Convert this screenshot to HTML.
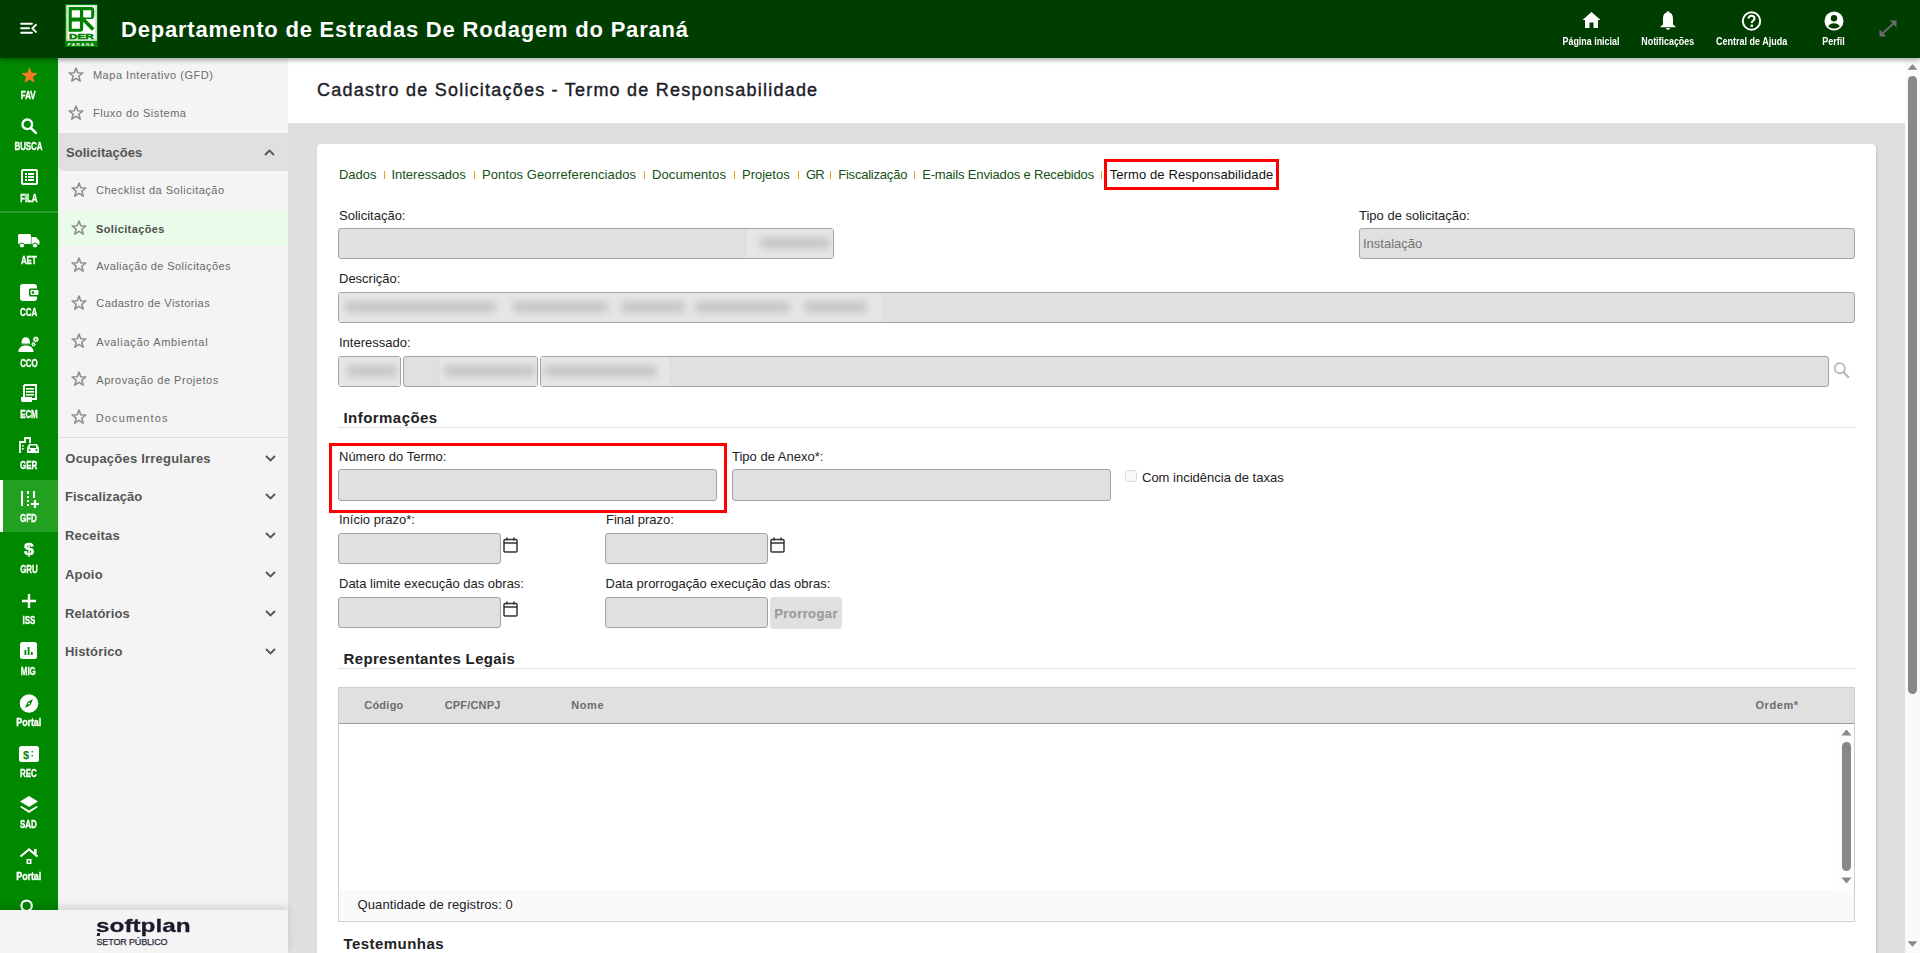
<!DOCTYPE html>
<html><head><meta charset="utf-8">
<style>
*{box-sizing:border-box;margin:0;padding:0}
html,body{width:1920px;height:953px;overflow:hidden;background:#dfdfdf;font-family:"Liberation Sans",sans-serif}
.a{position:absolute}
#hdr{left:0;top:0;width:1920px;height:58px;background:#003d00;z-index:5;box-shadow:0 2px 5px rgba(0,0,0,.35)}
#rail{left:0;top:58px;width:58px;height:852px;background:#008800;overflow:hidden}
#menu{left:58px;top:58px;width:230px;height:852px;background:#f4f4f4;overflow:hidden}
#foot{left:0;top:910px;width:288px;height:43px;background:#f4f4f4;box-shadow:0 -4px 8px rgba(0,0,0,.12)}
#titleband{left:288px;top:58px;width:1617px;height:65px;background:#fff}
#vscroll{left:1905px;top:58px;width:15px;height:895px;background:#fafafa}
#card{left:317px;top:144px;width:1559px;height:820px;background:#fff;border-radius:4px;box-shadow:1px 1px 3px rgba(0,0,0,.12)}
.rl{position:absolute;left:-0.5px;width:58px;text-align:center;color:#fff;font-weight:bold;font-size:10px;line-height:11.5px;letter-spacing:-0.15px;margin-top:1px;-webkit-text-stroke:.3px #fff}
.ri{position:absolute}
.mi{position:absolute;margin-top:1px;font-size:11px;line-height:11px;color:#6a6a6a;white-space:nowrap}
.star{position:absolute;width:16px;height:15px}
.mh{position:absolute;font-size:13px;line-height:13px;font-weight:bold;color:#555;white-space:nowrap}
.chev{position:absolute;left:207px;width:11px;height:7px}
.lbl{position:absolute;font-size:13px;line-height:13px;color:#222;white-space:nowrap}
.inp{position:absolute;background:#e0e0e0;border:1px solid #a3a3a3;border-radius:3px}
.tab{position:absolute;top:168.2px;font-size:13px;line-height:13px;color:#155015;white-space:nowrap}
.sep{position:absolute;top:171px;width:1px;height:8px;background:#e6a117}
.sec{position:absolute;font-size:15px;line-height:15px;font-weight:bold;color:#222;letter-spacing:.35px;white-space:nowrap}
.secline{position:absolute;height:1px;background:#e2e2e2}
.hi{position:absolute;top:36.6px;width:80px;text-align:center;color:#fff;font-weight:bold;font-size:10px;line-height:10px;white-space:nowrap}
.th{position:absolute;top:700.3px;font-size:11px;line-height:11px;font-weight:bold;color:#6d6d6d;white-space:nowrap}
.cal{position:absolute;width:14px;height:16px}
.blur{position:absolute;background:#c8c8c8;filter:blur(3.5px);border-radius:4px}
</style></head><body>

<!-- HEADER -->
<div id="hdr" class="a">
  <svg class="a" style="left:20px;top:21px" width="18" height="14" viewBox="0 0 18 14"><rect x="0.2" y="1.8" width="12.7" height="1.95" rx="0.95" fill="#fff"/><rect x="0.2" y="6.2" width="9.8" height="1.95" rx="0.95" fill="#fff"/><rect x="0.2" y="10.8" width="12.7" height="2" rx="1" fill="#fff"/><path d="M15.9 3.9 L12.3 7.4 L15.9 10.9" stroke="#fff" stroke-width="2" fill="none" stroke-linecap="round" stroke-linejoin="round"/></svg>
  <svg class="a" style="left:65px;top:4px" width="33" height="43" viewBox="0 0 33 43">
    <rect x="0" y="0" width="32.9" height="42.9" fill="#008000"/>
    <rect x="1.3" y="1" width="30.5" height="35.8" fill="#fff"/>
    <rect x="2.2" y="1.9" width="28.7" height="34" fill="none" stroke="#7cc47c" stroke-width="0.5"/>
    <path fill-rule="evenodd" fill="#008000" d="M3.6 3 H26 Q29.3 3 29.3 6.3 V12 Q29.3 15.1 26 15.1 H18.2 V24.5 Q18.2 27.7 15 27.7 H3.6 Z M6.8 6.3 V13.4 H14.9 V6.3 Z M18.2 6.3 V13.4 H26.2 V6.3 Z M6.8 17.4 V24.7 H14.9 V17.4 Z"/>
    <path d="M17.5 14.5 L28.2 25.6" stroke="#008000" stroke-width="3.6"/>
    <text x="4" y="35" textLength="24.8" lengthAdjust="spacingAndGlyphs" font-family="Liberation Sans" font-weight="bold" font-size="7.3" fill="#008000" stroke="#008000" stroke-width="0.5">DER</text>
    <text x="2.6" y="41.6" textLength="27.4" lengthAdjust="spacingAndGlyphs" font-family="Liberation Sans" font-weight="bold" font-size="4.3" fill="#e8f4e8" letter-spacing="0.8">PARANA</text>
  </svg>
  <!-- header right icons -->
  <svg class="a" style="left:1582px;top:11px" width="19" height="17" viewBox="0 0 19 17"><path d="M9.5 1 L18.5 9 H16 V17 H11.5 V11.5 H7.5 V17 H3 V9 H0.5 Z" fill="#fff"/></svg>
  <svg class="a" style="left:1660px;top:11px" width="16" height="19" viewBox="0 0 16 19"><circle cx="8" cy="1.6" r="1.4" fill="#fff"/><path d="M8 1.5 C3.6 1.5 3 5 3 8.5 V13.5 L0.5 15.6 V16.3 H15.5 V15.6 L13 13.5 V8.5 C13 5 12.4 1.5 8 1.5 Z" fill="#fff"/><path d="M6 17 H10 C10 18.2 9 18.8 8 18.8 C7 18.8 6 18.2 6 17 Z" fill="#fff"/></svg>
  <svg class="a" style="left:1741px;top:10.5px" width="21" height="20" viewBox="0 0 21 20"><circle cx="10.5" cy="10" r="8.7" stroke="#fff" stroke-width="2" fill="none"/><path d="M7.5 7.6 C7.5 5.8 8.8 4.8 10.5 4.8 C12.3 4.8 13.5 5.9 13.5 7.4 C13.5 9.5 10.8 9.6 10.8 12" stroke="#fff" stroke-width="2.1" fill="none"/><rect x="9.6" y="13.6" width="2.3" height="2.3" fill="#fff"/></svg>
  <svg class="a" style="left:1823.5px;top:10.5px" width="20" height="20" viewBox="0 0 20 20"><circle cx="10" cy="10" r="9.5" fill="#fff"/><circle cx="10" cy="7.3" r="3.2" fill="#003d00"/><path d="M4.2 15.3 C5.3 13 7.5 12.2 10 12.2 C12.5 12.2 14.7 13 15.8 15.3 C14.3 16.9 12.3 17.6 10 17.6 C7.7 17.6 5.7 16.9 4.2 15.3 Z" fill="#003d00"/></svg>
  <svg class="a" style="left:1879px;top:19.5px" width="18" height="17" viewBox="0 0 18 17"><path d="M2.5 14.5 L15.5 2.5" stroke="#6b6b6b" stroke-width="1.8"/><path d="M10.5 0.5 H17.5 V7.5 Z" fill="#6b6b6b"/><path d="M0.5 9.5 V16.5 H7.5 Z" fill="#6b6b6b"/></svg>
  <div class="hi" style="left:1551.3px"><span style="display:inline-block;transform:scaleX(.89)">Página inicial</span></div>
  <div class="hi" style="left:1627.9px"><span style="display:inline-block;transform:scaleX(.89)">Notificações</span></div>
  <div class="hi" style="left:1711.5px"><span style="display:inline-block;transform:scaleX(.9)">Central de Ajuda</span></div>
  <div class="hi" style="left:1793.6px"><span style="display:inline-block;transform:scaleX(.9)">Perfil</span></div>
</div>
<div class="a" style="left:121px;top:18px;font-size:22px;line-height:22px;font-weight:bold;color:#fff;letter-spacing:.8px;white-space:nowrap;z-index:6;margin-top:1px">Departamento de Estradas De Rodagem do Paraná</div>

<!-- RAIL -->
<div id="rail" class="a">
  <!-- y coords relative to rail top (58) -->
  <svg class="ri" style="left:21px;top:9px" width="17" height="16" viewBox="0 0 24 23"><path d="M12 0 L15 8.2 L24 8.6 L17 14.2 L19.4 23 L12 18 L4.6 23 L7 14.2 L0 8.6 L9 8.2 Z" fill="#f47b20"/></svg>
  <div class="rl" style="top:31px"><span style="display:inline-block;transform:scaleX(.8)">FAV</span></div>
  <svg class="ri" style="left:21px;top:60px" width="16" height="16" viewBox="0 0 16 16"><circle cx="6.3" cy="6.3" r="4.8" stroke="#fff" stroke-width="2.4" fill="none"/><path d="M9.8 9.8 L14.8 14.8" stroke="#fff" stroke-width="2.6" stroke-linecap="round"/></svg>
  <div class="rl" style="top:82px"><span style="display:inline-block;transform:scaleX(.8)">BUSCA</span></div>
  <svg class="ri" style="left:21px;top:111px" width="17" height="16" viewBox="0 0 17 16"><rect x="1" y="1" width="15" height="14" rx="1" stroke="#fff" stroke-width="2" fill="none"/><rect x="4" y="4" width="2" height="2" fill="#fff"/><rect x="7" y="4" width="6" height="2" fill="#fff"/><rect x="4" y="7" width="2" height="2" fill="#fff"/><rect x="7" y="7" width="6" height="2" fill="#fff"/><rect x="4" y="10" width="2" height="2" fill="#fff"/><rect x="7" y="10" width="6" height="2" fill="#fff"/></svg>
  <div class="rl" style="top:134px"><span style="display:inline-block;transform:scaleX(.8)">FILA</span></div>
  <div class="a" style="left:0;top:153px;width:58px;height:2px;background:#2a9a2a"></div>
  <!-- AET truck -->
  <svg class="ri" style="left:18px;top:176px" width="22" height="14" viewBox="0 0 22 14"><rect x="0" y="0" width="13" height="10" rx="1.5" fill="#fff"/><path d="M13.5 3 H18 L21.5 7 V10.5 H13.5 Z" fill="#fff"/><circle cx="4" cy="11.5" r="2.5" fill="#fff" stroke="#008800" stroke-width="1"/><circle cx="17" cy="11.5" r="2.5" fill="#fff" stroke="#008800" stroke-width="1"/></svg>
  <div class="rl" style="top:196px"><span style="display:inline-block;transform:scaleX(.8)">AET</span></div>
  <!-- CCA wallet -->
  <svg class="ri" style="left:20px;top:226px" width="19" height="17" viewBox="0 0 19 17"><rect x="0" y="0" width="17" height="17" rx="3" fill="#fff"/><rect x="9" y="4.5" width="9.5" height="8" rx="1.5" fill="#008800"/><rect x="10.5" y="6" width="8" height="5" rx="1" fill="#fff"/><circle cx="13" cy="8.5" r="1.3" fill="#008800"/></svg>
  <div class="rl" style="top:248px"><span style="display:inline-block;transform:scaleX(.8)">CCA</span></div>
  <!-- CCO -->
  <svg class="ri" style="left:18px;top:278px" width="22" height="17" viewBox="0 0 22 17"><path d="M3.5 7 C3.5 3 5.5 1.3 7.8 1.3 C10.1 1.3 12 3 12 7 Z" fill="#fff"/><rect x="3.5" y="7" width="8.5" height="1.4" fill="#fff" opacity=".6"/><path d="M0.4 16 C0.4 11.5 4 9.5 7.8 9.5 C11.6 9.5 15.6 11.5 15.6 16 Z" fill="#fff"/><path d="M20.90 3.30 L20.84 3.90 L19.83 4.14 L19.63 4.52 L19.99 5.49 L19.52 5.88 L18.64 5.33 L18.23 5.46 L17.80 6.40 L17.20 6.34 L16.96 5.33 L16.58 5.13 L15.61 5.49 L15.22 5.02 L15.77 4.14 L15.64 3.73 L14.70 3.30 L14.76 2.70 L15.77 2.46 L15.97 2.08 L15.61 1.11 L16.08 0.72 L16.96 1.27 L17.37 1.14 L17.80 0.20 L18.40 0.26 L18.64 1.27 L19.02 1.47 L19.99 1.11 L20.38 1.58 L19.83 2.46 L19.96 2.87 Z" fill="#fff"/><circle cx="17.8" cy="3.3" r="0.9" fill="#008800"/><path d="M17.90 8.30 L17.82 8.92 L16.89 9.10 L16.63 9.43 L16.70 10.38 L16.12 10.62 L15.50 9.90 L15.09 9.85 L14.30 10.38 L13.80 10.00 L14.11 9.10 L13.95 8.71 L13.10 8.30 L13.18 7.68 L14.11 7.50 L14.37 7.17 L14.30 6.22 L14.88 5.98 L15.50 6.70 L15.91 6.75 L16.70 6.22 L17.20 6.60 L16.89 7.50 L17.05 7.89 Z" fill="#fff"/><circle cx="15.5" cy="8.3" r="0.6" fill="#008800"/></svg>
  <div class="rl" style="top:299px"><span style="display:inline-block;transform:scaleX(.8)">CCO</span></div>
  <!-- ECM -->
  <svg class="ri" style="left:20px;top:326px" width="18" height="19" viewBox="0 0 18 19"><path d="M4 1 H16 V15 H12" stroke="#fff" stroke-width="2" fill="none"/><rect x="6" y="4" width="8" height="1.6" fill="#fff"/><rect x="6" y="7" width="8" height="1.6" fill="#fff"/><rect x="6" y="10" width="8" height="1.6" fill="#fff"/><path d="M4 1 V13" stroke="#fff" stroke-width="2"/><path d="M1 13 H12 V18 H3 C1.5 18 1 17 1 15.5 Z" fill="#fff"/></svg>
  <div class="rl" style="top:350px"><span style="display:inline-block;transform:scaleX(.8)">ECM</span></div>
  <!-- GER -->
  <svg class="ri" style="left:19px;top:379px" width="21" height="17" viewBox="0 0 21 17"><path d="M1 16 V5 H6 V1 H11 V6" stroke="#fff" stroke-width="1.8" fill="none"/><rect x="3" y="8" width="1.6" height="1.6" fill="#fff"/><rect x="3" y="11" width="1.6" height="1.6" fill="#fff"/><path d="M8 11 L10 7 H18 L20 11 V16 H8 Z" fill="#fff"/><rect x="11" y="8.5" width="6" height="2.5" fill="#008800"/><circle cx="10.5" cy="13" r="1" fill="#008800"/><circle cx="17.5" cy="13" r="1" fill="#008800"/></svg>
  <div class="rl" style="top:401px"><span style="display:inline-block;transform:scaleX(.8)">GER</span></div>
  <!-- GFD active -->
  <div class="a" style="left:0;top:422px;width:3px;height:52px;background:#fff"></div>
  <div class="a" style="left:3px;top:422px;width:55px;height:52px;background:#22a022"></div>
  <svg class="ri" style="left:20px;top:433px" width="19" height="17" viewBox="0 0 19 17"><rect x="1" y="0" width="2" height="15" fill="#fff"/><rect x="7" y="0" width="2" height="3" fill="#fff"/><rect x="7" y="5" width="2" height="2" fill="#fff"/><rect x="7" y="9" width="2" height="2" fill="#fff"/><rect x="7" y="13" width="2" height="2" fill="#fff"/><rect x="13" y="0" width="2" height="7" fill="#fff"/><path d="M11 13 H19 M15 9 V17" stroke="#fff" stroke-width="2.2"/></svg>
  <div class="rl" style="top:454px"><span style="display:inline-block;transform:scaleX(.8)">GFD</span></div>
  <!-- GRU -->
  <div class="a" style="left:0;top:482.5px;width:58px;text-align:center;color:#fff;font-weight:bold;font-size:17px;line-height:17px;transform:scaleX(1.05);-webkit-text-stroke:.4px #fff">$</div>
  <div class="rl" style="top:505px"><span style="display:inline-block;transform:scaleX(.8)">GRU</span></div>
  <!-- ISS -->
  <svg class="ri" style="left:22px;top:536px" width="14" height="14" viewBox="0 0 14 14"><path d="M7 0 V14 M0 7 H14" stroke="#fff" stroke-width="2.4"/></svg>
  <div class="rl" style="top:556px"><span style="display:inline-block;transform:scaleX(.8)">ISS</span></div>
  <!-- MIG -->
  <svg class="ri" style="left:20px;top:584px" width="17" height="17" viewBox="0 0 17 17"><rect x="0" y="0" width="17" height="17" rx="2.5" fill="#fff"/><rect x="4.5" y="8" width="1.8" height="5" fill="#008800"/><rect x="7.7" y="5" width="1.8" height="8" fill="#008800"/><rect x="10.9" y="10" width="1.8" height="3" fill="#008800"/></svg>
  <div class="rl" style="top:607px"><span style="display:inline-block;transform:scaleX(.8)">MIG</span></div>
  <!-- Portal compass -->
  <svg class="ri" style="left:19px;top:636px" width="20" height="19" viewBox="0 0 20 19"><circle cx="10" cy="9.5" r="9.3" fill="#fff"/><path d="M14 5 L11.5 11 L6 14 L8.5 8 Z" fill="#008800"/><circle cx="10" cy="9.5" r="1" fill="#fff"/></svg>
  <div class="rl" style="top:658px"><span style="display:inline-block;transform:scaleX(.9)">Portal</span></div>
  <!-- REC -->
  <svg class="ri" style="left:19px;top:688px" width="20" height="16" viewBox="0 0 20 16"><rect x="0" y="0" width="20" height="16" rx="2.5" fill="#fff"/><text x="4" y="12.5" font-family="Liberation Sans" font-weight="bold" font-size="11" fill="#008800">$</text><rect x="12.5" y="5" width="1.4" height="1.4" fill="#008800"/><rect x="12.5" y="9" width="1.4" height="1.4" fill="#008800"/></svg>
  <div class="rl" style="top:709px"><span style="display:inline-block;transform:scaleX(.8)">REC</span></div>
  <!-- SAD layers -->
  <svg class="ri" style="left:20px;top:738px" width="18" height="18" viewBox="0 0 18 18"><path d="M9 0 L18 5.5 L9 11 L0 5.5 Z" fill="#fff"/><path d="M1.5 10 L9 14.5 L16.5 10 L18 11 L9 17 L0 11 Z" fill="#fff"/></svg>
  <div class="rl" style="top:760px"><span style="display:inline-block;transform:scaleX(.8)">SAD</span></div>
  <!-- Portal house -->
  <svg class="ri" style="left:19px;top:790px" width="20" height="17" viewBox="0 0 20 17"><path d="M1.5 8.5 L10 1.5 L18.5 8.5" stroke="#fff" stroke-width="2.2" fill="none"/><rect x="15" y="1" width="2.6" height="5" fill="#fff"/><path d="M4 10 V17 H16 V10" stroke="#fff" stroke-width="0" fill="none"/><rect x="7.5" y="11" width="5" height="5" fill="#fff"/><rect x="9" y="12.5" width="2" height="2" fill="#008800"/></svg>
  <div class="rl" style="top:812px"><span style="display:inline-block;transform:scaleX(.9)">Portal</span></div>
  <svg class="ri" style="left:19px;top:840px" width="16" height="16" viewBox="0 0 16 16"><circle cx="7.6" cy="7.8" r="5.2" stroke="#fff" stroke-width="2.2" fill="none"/></svg>
</div>


<!-- MENU -->
<div id="menu" class="a"></div>
<div class="a" style="left:58px;top:133px;width:230px;height:38px;background:#e0e0e0;border-radius:0 0 0 6px"></div>
<div class="a" style="left:58px;top:211px;width:230px;height:35px;background:#e9fce9"></div>
<div class="a" style="left:58px;top:437px;width:230px;height:1px;background:#dcdcdc"></div>
<svg class="a" style="left:68px;top:67.2px" width="16" height="15" viewBox="0 0 24 23"><path d="M12 1.5 L14.7 8.9 L22.5 9.2 L16.4 14.1 L18.5 21.8 L12 17.4 L5.5 21.8 L7.6 14.1 L1.5 9.2 L9.3 8.9 Z" fill="none" stroke="#8f8f8f" stroke-width="2.4" stroke-linejoin="round"/></svg>
<div class="mi" style="left:92.9px;top:69.4px;letter-spacing:0.53px">Mapa Interativo (GFD)</div>
<svg class="a" style="left:68px;top:105.2px" width="16" height="15" viewBox="0 0 24 23"><path d="M12 1.5 L14.7 8.9 L22.5 9.2 L16.4 14.1 L18.5 21.8 L12 17.4 L5.5 21.8 L7.6 14.1 L1.5 9.2 L9.3 8.9 Z" fill="none" stroke="#8f8f8f" stroke-width="2.4" stroke-linejoin="round"/></svg>
<div class="mi" style="left:92.9px;top:107.4px;letter-spacing:0.54px">Fluxo do Sistema</div>
<svg class="a" style="left:70.5px;top:182.2px" width="16" height="15" viewBox="0 0 24 23"><path d="M12 1.5 L14.7 8.9 L22.5 9.2 L16.4 14.1 L18.5 21.8 L12 17.4 L5.5 21.8 L7.6 14.1 L1.5 9.2 L9.3 8.9 Z" fill="none" stroke="#8f8f8f" stroke-width="2.4" stroke-linejoin="round"/></svg>
<div class="mi" style="left:96px;top:184.4px;letter-spacing:0.52px">Checklist da Solicitação</div>
<svg class="a" style="left:70.5px;top:220.3px" width="16" height="15" viewBox="0 0 24 23"><path d="M12 1.5 L14.7 8.9 L22.5 9.2 L16.4 14.1 L18.5 21.8 L12 17.4 L5.5 21.8 L7.6 14.1 L1.5 9.2 L9.3 8.9 Z" fill="none" stroke="#8f8f8f" stroke-width="2.4" stroke-linejoin="round"/></svg>
<div class="mi" style="left:96px;top:222.5px;letter-spacing:0.38px;font-weight:bold;color:#505050">Solicitações</div>
<svg class="a" style="left:71px;top:257.4px" width="16" height="15" viewBox="0 0 24 23"><path d="M12 1.5 L14.7 8.9 L22.5 9.2 L16.4 14.1 L18.5 21.8 L12 17.4 L5.5 21.8 L7.6 14.1 L1.5 9.2 L9.3 8.9 Z" fill="none" stroke="#8f8f8f" stroke-width="2.4" stroke-linejoin="round"/></svg>
<div class="mi" style="left:96.3px;top:259.6px;letter-spacing:0.40px">Avaliação de Solicitações</div>
<svg class="a" style="left:71px;top:295.2px" width="16" height="15" viewBox="0 0 24 23"><path d="M12 1.5 L14.7 8.9 L22.5 9.2 L16.4 14.1 L18.5 21.8 L12 17.4 L5.5 21.8 L7.6 14.1 L1.5 9.2 L9.3 8.9 Z" fill="none" stroke="#8f8f8f" stroke-width="2.4" stroke-linejoin="round"/></svg>
<div class="mi" style="left:96.3px;top:297.4px;letter-spacing:0.42px">Cadastro de Vistorias</div>
<svg class="a" style="left:71px;top:333.3px" width="16" height="15" viewBox="0 0 24 23"><path d="M12 1.5 L14.7 8.9 L22.5 9.2 L16.4 14.1 L18.5 21.8 L12 17.4 L5.5 21.8 L7.6 14.1 L1.5 9.2 L9.3 8.9 Z" fill="none" stroke="#8f8f8f" stroke-width="2.4" stroke-linejoin="round"/></svg>
<div class="mi" style="left:96.3px;top:335.5px;letter-spacing:0.69px">Avaliação Ambiental</div>
<svg class="a" style="left:71px;top:371.3px" width="16" height="15" viewBox="0 0 24 23"><path d="M12 1.5 L14.7 8.9 L22.5 9.2 L16.4 14.1 L18.5 21.8 L12 17.4 L5.5 21.8 L7.6 14.1 L1.5 9.2 L9.3 8.9 Z" fill="none" stroke="#8f8f8f" stroke-width="2.4" stroke-linejoin="round"/></svg>
<div class="mi" style="left:96.3px;top:373.5px;letter-spacing:0.53px">Aprovação de Projetos</div>
<svg class="a" style="left:71px;top:409.4px" width="16" height="15" viewBox="0 0 24 23"><path d="M12 1.5 L14.7 8.9 L22.5 9.2 L16.4 14.1 L18.5 21.8 L12 17.4 L5.5 21.8 L7.6 14.1 L1.5 9.2 L9.3 8.9 Z" fill="none" stroke="#8f8f8f" stroke-width="2.4" stroke-linejoin="round"/></svg>
<div class="mi" style="left:95.8px;top:411.6px;letter-spacing:1.1px">Documentos</div>
<div class="mh" style="left:66px;top:145.9px;letter-spacing:0.04px">Solicitações</div>
<svg class="a" style="left:264px;top:148.9px" width="11" height="7" viewBox="0 0 11 7"><path d="M1 6 L5.5 1.5 L10 6" stroke="#555" stroke-width="1.8" fill="none"/></svg>
<div class="mh" style="left:65.3px;top:451.7px;letter-spacing:0.22px">Ocupações Irregulares</div>
<svg class="a" style="left:264.5px;top:454.7px" width="11" height="7" viewBox="0 0 11 7"><path d="M1 1 L5.5 5.5 L10 1" stroke="#555" stroke-width="1.8" fill="none"/></svg>
<div class="mh" style="left:64.9px;top:489.7px;letter-spacing:0.07px">Fiscalização</div>
<svg class="a" style="left:264.5px;top:492.7px" width="11" height="7" viewBox="0 0 11 7"><path d="M1 1 L5.5 5.5 L10 1" stroke="#555" stroke-width="1.8" fill="none"/></svg>
<div class="mh" style="left:64.9px;top:529.2px;letter-spacing:0.19px">Receitas</div>
<svg class="a" style="left:264.5px;top:532.2px" width="11" height="7" viewBox="0 0 11 7"><path d="M1 1 L5.5 5.5 L10 1" stroke="#555" stroke-width="1.8" fill="none"/></svg>
<div class="mh" style="left:64.9px;top:568.0px;letter-spacing:0.23px">Apoio</div>
<svg class="a" style="left:264.5px;top:571.0px" width="11" height="7" viewBox="0 0 11 7"><path d="M1 1 L5.5 5.5 L10 1" stroke="#555" stroke-width="1.8" fill="none"/></svg>
<div class="mh" style="left:64.9px;top:606.8px;letter-spacing:0.14px">Relatórios</div>
<svg class="a" style="left:264.5px;top:609.8px" width="11" height="7" viewBox="0 0 11 7"><path d="M1 1 L5.5 5.5 L10 1" stroke="#555" stroke-width="1.8" fill="none"/></svg>
<div class="mh" style="left:64.9px;top:645.0px;letter-spacing:0.16px">Histórico</div>
<svg class="a" style="left:264.5px;top:648.0px" width="11" height="7" viewBox="0 0 11 7"><path d="M1 1 L5.5 5.5 L10 1" stroke="#555" stroke-width="1.8" fill="none"/></svg>

<!-- FOOTER -->
<div id="foot" class="a"></div>
<div class="a" style="left:96px;top:915.7px;font-size:19px;line-height:19px;font-weight:bold;color:#1b1b2d;white-space:nowrap;transform:scaleX(1.28);transform-origin:0 0;-webkit-text-stroke:.3px #1b1b2d">softplan</div>
<div class="a" style="left:97px;top:933.2px;width:3px;height:2.6px;background:#1b1b2d;transform:skewX(-10deg)"></div>
<div class="a" style="left:96.5px;top:938.3px;font-size:9px;line-height:9px;color:#2b2b3a;letter-spacing:-.15px;white-space:nowrap;-webkit-text-stroke:.25px #2b2b3a">SETOR PÚBLICO</div>

<!-- MAIN -->
<div id="titleband" class="a"></div>
<div class="a" style="left:317px;top:80.5px;font-size:18px;line-height:18px;color:#1c1c28;letter-spacing:1.22px;-webkit-text-stroke:.4px #1c1c28;white-space:nowrap">Cadastro de Solicitações - Termo de Responsabilidade</div>
<div id="card" class="a"></div>
<div class="tab" style="left:338.9px">Dados</div>
<div class="tab" style="left:391.4px">Interessados</div>
<div class="tab" style="left:482.0px;letter-spacing:.1px">Pontos Georreferenciados</div>
<div class="tab" style="left:652.0px;letter-spacing:.1px">Documentos</div>
<div class="tab" style="left:742.0px">Projetos</div>
<div class="tab" style="left:806.0px;letter-spacing:-.75px">GR</div>
<div class="tab" style="left:838.2px;letter-spacing:-.21px">Fiscalização</div>
<div class="tab" style="left:922.2px;letter-spacing:-.16px">E-mails Enviados e Recebidos</div>
<div class="sep" style="left:384px"></div>
<div class="sep" style="left:474px"></div>
<div class="sep" style="left:644px"></div>
<div class="sep" style="left:734px"></div>
<div class="sep" style="left:798px"></div>
<div class="sep" style="left:830px"></div>
<div class="sep" style="left:914px"></div>
<div class="sep" style="left:1101px"></div>
<div class="tab" style="left:1109.7px;color:#111;letter-spacing:.1px">Termo de Responsabilidade</div>
<div class="a" style="left:1104px;top:159px;width:175px;height:31px;border:3px solid #ff0000"></div>
<div class="lbl" style="left:339px;top:208.7px">Solicitação:</div>
<div class="inp" style="left:338px;top:228px;width:496px;height:31px"></div>
<div class="a" style="left:747px;top:229px;width:86px;height:29px;background:#e6e6e6"></div>
<div class="blur" style="left:760px;top:237px;width:70px;height:12px"></div>
<div class="lbl" style="left:1359px;top:208.9px">Tipo de solicitação:</div>
<div class="inp" style="left:1359px;top:228px;width:496px;height:31px"></div>
<div class="lbl" style="left:1363px;top:237px;color:#747474">Instalação</div>
<div class="lbl" style="left:339px;top:272.2px">Descrição:</div>
<div class="inp" style="left:338px;top:292px;width:1517px;height:31px"></div>
<div class="a" style="left:339px;top:293px;width:543px;height:29px;background:#e6e6e6"></div>
<div class="blur" style="left:345px;top:301px;width:151px;height:12px"></div>
<div class="blur" style="left:513px;top:301px;width:95px;height:12px"></div>
<div class="blur" style="left:621px;top:301px;width:64px;height:12px"></div>
<div class="blur" style="left:695px;top:301px;width:95px;height:12px"></div>
<div class="blur" style="left:804px;top:301px;width:63px;height:12px"></div>
<div class="lbl" style="left:339px;top:336.0px">Interessado:</div>
<div class="inp" style="left:338px;top:356px;width:63px;height:31px"></div>
<div class="inp" style="left:403px;top:356px;width:135px;height:31px"></div>
<div class="inp" style="left:540px;top:356px;width:1289px;height:31px"></div>
<div class="a" style="left:339px;top:357px;width:61px;height:29px;background:#e6e6e6"></div>
<div class="a" style="left:440px;top:357px;width:97px;height:29px;background:#e6e6e6"></div>
<div class="a" style="left:541px;top:357px;width:128px;height:29px;background:#e6e6e6"></div>
<div class="blur" style="left:347px;top:365px;width:50px;height:12px"></div>
<div class="blur" style="left:444px;top:365px;width:91px;height:12px"></div>
<div class="blur" style="left:544px;top:365px;width:113px;height:12px"></div>
<svg class="a" style="left:1833px;top:361.5px" width="17" height="17" viewBox="0 0 17 17"><circle cx="6.8" cy="6.3" r="5.1" stroke="#b8b8b8" stroke-width="1.7" fill="none"/><path d="M10.4 10 L15.8 15.6" stroke="#b8b8b8" stroke-width="2.3"/></svg>
<div class="sec" style="left:343.5px;top:409.6px;letter-spacing:.45px">Informações</div>
<div class="secline" style="left:338px;top:427px;width:1517px"></div>
<div class="a" style="left:329px;top:443px;width:398px;height:70px;border:3px solid #ff0000"></div>
<div class="lbl" style="left:339px;top:449.7px">Número do Termo:</div>
<div class="inp" style="left:338px;top:469px;width:379px;height:32px"></div>
<div class="lbl" style="left:732px;top:449.7px">Tipo de Anexo*:</div>
<div class="inp" style="left:732px;top:469px;width:379px;height:32px"></div>
<div class="a" style="left:1125px;top:470px;width:12px;height:12px;border:1px solid #dcdcdc;border-radius:2.5px;background:#f9f9f9"></div>
<div class="lbl" style="left:1142px;top:471.1px">Com incidência de taxas</div>
<div class="lbl" style="left:339px;top:513.0px">Início prazo*:</div>
<div class="inp" style="left:338px;top:533px;width:163px;height:31px"></div>
<div class="lbl" style="left:606px;top:513.0px">Final prazo:</div>
<div class="inp" style="left:605px;top:533px;width:163px;height:31px"></div>
<div class="lbl" style="left:339px;top:577.2px">Data limite execução das obras:</div>
<div class="inp" style="left:338px;top:597px;width:163px;height:31px"></div>
<div class="lbl" style="left:605.5px;top:577.2px">Data prorrogação execução das obras:</div>
<div class="inp" style="left:605px;top:597px;width:163px;height:31px"></div>
<svg class="a" style="left:503px;top:537px" width="15" height="16" viewBox="0 0 15 16"><rect x="1" y="2.5" width="13" height="12.5" rx="1" stroke="#333" stroke-width="1.5" fill="none"/><path d="M1 6 H14" stroke="#333" stroke-width="1.5"/><path d="M4 0.5 V3.5 M11 0.5 V3.5" stroke="#333" stroke-width="1.5"/></svg>
<svg class="a" style="left:770px;top:537px" width="15" height="16" viewBox="0 0 15 16"><rect x="1" y="2.5" width="13" height="12.5" rx="1" stroke="#333" stroke-width="1.5" fill="none"/><path d="M1 6 H14" stroke="#333" stroke-width="1.5"/><path d="M4 0.5 V3.5 M11 0.5 V3.5" stroke="#333" stroke-width="1.5"/></svg>
<svg class="a" style="left:503px;top:601px" width="15" height="16" viewBox="0 0 15 16"><rect x="1" y="2.5" width="13" height="12.5" rx="1" stroke="#333" stroke-width="1.5" fill="none"/><path d="M1 6 H14" stroke="#333" stroke-width="1.5"/><path d="M4 0.5 V3.5 M11 0.5 V3.5" stroke="#333" stroke-width="1.5"/></svg>
<div class="a" style="left:770px;top:597px;width:72px;height:32px;background:#e0e0e0;border-radius:4px"></div>
<div class="a" style="left:774.3px;top:607.1px;font-size:13px;line-height:13px;font-weight:bold;color:#9c9c9c;letter-spacing:.4px;-webkit-text-stroke:.25px #9c9c9c">Prorrogar</div>
<div class="sec" style="left:343.5px;top:650.9px;letter-spacing:.36px">Representantes Legais</div>
<div class="secline" style="left:338px;top:668px;width:1517px"></div>
<div class="a" style="left:338px;top:687px;width:1517px;height:235px;border:1px solid #cfcfcf;background:#fff"></div>
<div class="a" style="left:339px;top:688px;width:1515px;height:36px;background:#e0e0e0;border-bottom:1px solid #9a9a9a"></div>
<div class="th" style="left:364.2px;letter-spacing:0.25px">Código</div>
<div class="th" style="left:444.7px;letter-spacing:0.17px">CPF/CNPJ</div>
<div class="th" style="left:571.2px;letter-spacing:0.6px">Nome</div>
<div class="th" style="left:1755.4px;letter-spacing:0.6px">Ordem*</div>
<div class="a" style="left:339px;top:890px;width:1515px;height:30px;background:#fafafa"></div>
<div class="lbl" style="left:357.6px;top:898.2px;letter-spacing:.08px">Quantidade de registros: 0</div>
<div class="a" style="left:1838px;top:724px;width:16px;height:166px;background:#fdfdfd"></div>
<svg class="a" style="left:1841px;top:729px" width="11" height="7" viewBox="0 0 11 7"><path d="M0.5 6.5 L5.5 0.5 L10.5 6.5 Z" fill="#888"/></svg>
<div class="a" style="left:1842px;top:742px;width:9px;height:129px;background:#888;border-radius:5px"></div>
<svg class="a" style="left:1841px;top:877px" width="11" height="7" viewBox="0 0 11 7"><path d="M0.5 0.5 L5.5 6.5 L10.5 0.5 Z" fill="#888"/></svg>
<div class="sec" style="left:343.5px;top:935.8px;letter-spacing:.45px">Testemunhas</div>
<div id="vscroll" class="a"></div>
<svg class="a" style="left:1907px;top:64px" width="11" height="6" viewBox="0 0 11 6"><path d="M0.5 5.8 L5.5 0.2 L10.5 5.8 Z" fill="#888"/></svg>
<div class="a" style="left:1908px;top:76px;width:9px;height:618px;background:#888;border-radius:5px"></div>
<svg class="a" style="left:1907px;top:940.5px" width="11" height="6" viewBox="0 0 11 6"><path d="M0.5 0.2 L5.5 5.8 L10.5 0.2 Z" fill="#888"/></svg>

</body></html>
